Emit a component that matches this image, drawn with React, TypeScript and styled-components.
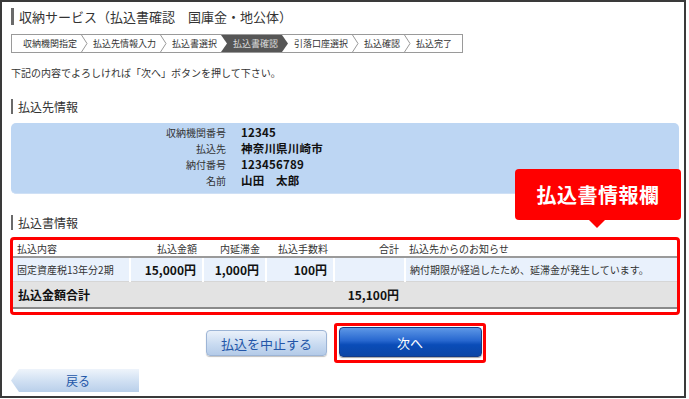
import { Fragment } from "react";
import styled, { createGlobalStyle } from "styled-components";

const GlobalStyle = createGlobalStyle`
	html, body {
		margin: 0;
		padding: 0;
		background: #ffffff;
	}
	body {
		font-family: "Noto Sans CJK JP", "Noto Sans", sans-serif;
		color: #333333;
	}
`;

const Frame = styled.div`
	position: relative;
	box-sizing: border-box;
	width: 686px;
	height: 398px;
	border: 2px solid #3a3a3a;
	padding: 0 5px 0 9px;
	display: flex;
	flex-direction: column;
	align-items: stretch;
`;

const PageTitle = styled.h1`
	margin: 6px 0 0;
	padding-left: 5px;
	border-left: 3px solid #6a6a6a;
	height: 17px;
	line-height: 17px;
	font-size: 13px;
	font-weight: 400;
	color: #333;
	white-space: nowrap;
`;

const Steps = styled.div`
	align-self: flex-start;
	display: flex;
	margin-top: 9px;
	height: 17px;
	border: 1px solid #9a9a9a;
	background: #fff;
`;

const Step = styled.div`
	display: flex;
	align-items: stretch;
`;

const StepLabel = styled.span<{ $active?: boolean; $first?: boolean }>`
	display: block;
	line-height: 17px;
	font-size: 9px;
	padding: 0 4px 0 ${({ $first }) => ($first ? "11px" : "5px")};
	background: ${({ $active }) => ($active ? "#565656" : "#fff")};
	color: ${({ $active }) => ($active ? "#dcdcdc" : "#333")};
	white-space: nowrap;
`;

const StepEnd = styled.span`
	display: block;
	width: 6px;
`;

const Intro = styled.p`
	margin: 13px 0 0;
	font-size: 10px;
	line-height: 14px;
	color: #333;
`;

const SectionTitle = styled.h2<{ $gap: number }>`
	margin: ${({ $gap }) => $gap}px 0 0;
	padding-left: 5px;
	border-left: 2px solid #6a6a6a;
	height: 15px;
	line-height: 15px;
	font-size: 12px;
	font-weight: 400;
	color: #333;
`;

const PayeeBox = styled.div`
	margin-top: 9px;
	height: 71px;
	box-sizing: border-box;
	padding: 1px 0 0;
	background: #bdd6f3;
	border-radius: 5px;
	border-bottom: 1px solid #cfe0f5;
	display: grid;
	grid-template-columns: 215px 1fr;
	column-gap: 15px;
	grid-auto-rows: 16px;
	align-items: center;
`;

const PayeeLabel = styled.div`
	text-align: right;
	font-size: 10px;
	color: #333;
`;

const PayeeValue = styled.div`
	font-size: 11.5px;
	font-weight: 700;
	color: #111;
	letter-spacing: 0.2px;
`;

const Highlight = styled.div`
	margin: 7px -1px 0;
	box-sizing: border-box;
	height: 78px;
	border: 3px solid #ff0000;
	border-radius: 4px;
	padding: 0 0 3px;
`;

const Table = styled.table`
	width: 100%;
	border-collapse: collapse;
	table-layout: fixed;
	font-size: 10px;
	color: #333;
`;

const HeadCell = styled.th<{ $align?: string }>`
	height: 16px;
	padding: 0 6px 0 4px;
	font-weight: 400;
	text-align: ${({ $align }) => $align || "left"};
	border-bottom: 2px solid #9a9a9a;
	white-space: nowrap;
`;

const DataRow = styled.tr`
	background: #e9f1fc;
	border-bottom: 1px solid #d6d6d6;
`;

const DataCell = styled.td<{ $amount?: boolean }>`
	height: 23px;
	padding: 0 6px 0 4px;
	text-align: ${({ $amount }) => ($amount ? "right" : "left")};
	font-size: ${({ $amount }) => ($amount ? "12px" : "10px")};
	font-weight: ${({ $amount }) => ($amount ? 700 : 400)};
	color: ${({ $amount }) => ($amount ? "#111" : "#333")};
	border-right: 2px solid #ffffff;
	white-space: nowrap;

	&:last-child {
		border-right: none;
	}
`;

const TotalRow = styled.tr`
	background: #e3e3e3;
	border-bottom: 2px solid #8a8a8a;
`;

const TotalCell = styled.td<{ $amount?: boolean }>`
	height: 25px;
	padding: 0 6px 0 5px;
	font-size: 12px;
	font-weight: 700;
	color: #111;
	text-align: ${({ $amount }) => ($amount ? "right" : "left")};
	white-space: nowrap;
`;

const Actions = styled.div`
	margin-top: 8px;
	display: flex;
	justify-content: center;
	align-items: center;
	gap: 7px;
	padding-left: 2px;
`;

const CancelButton = styled.button`
	width: 121px;
	height: 26px;
	border: 1px solid #9db5d6;
	border-radius: 4px;
	background: linear-gradient(#eaf1fa, #c9dbf1 55%, #b4cbe8);
	box-shadow: 0 1px 1px rgba(0, 0, 0, 0.25);
	color: #2356a8;
	font-family: inherit;
	font-size: 13px;
	padding: 0;
`;

const NextOutline = styled.div`
	box-sizing: border-box;
	width: 152px;
	height: 40px;
	border: 3px solid #ff0000;
	border-radius: 3px;
	display: flex;
	align-items: center;
	justify-content: center;
	padding-bottom: 2px;
`;

const NextButton = styled.button`
	width: 143px;
	height: 30px;
	border: 1px solid #153b86;
	border-radius: 4px;
	background: linear-gradient(#5d97e6, #2767cf 45%, #0a4cb8 60%, #0b46a6);
	box-shadow: 0 1px 1px rgba(0, 0, 0, 0.35);
	color: #ffffff;
	font-family: inherit;
	font-size: 13px;
	padding: 0;
`;

const BackButton = styled.button`
	align-self: flex-start;
	margin-top: 6px;
	width: 128px;
	height: 23px;
	border: none;
	padding: 0 0 0 6px;
	clip-path: polygon(8px 0, 100% 0, 100% 100%, 8px 100%, 0 50%);
	background: linear-gradient(#eef4fb, #cfdff2 55%, #b9cfea);
	color: #2356a8;
	font-family: inherit;
	font-size: 12px;
`;

const Callout = styled.div`
	position: absolute;
	left: 513px;
	top: 167px;
	width: 166px;
	height: 51px;
	border-radius: 4px;
	background: #ff0000;
	color: #ffffff;
	font-size: 20px;
	font-weight: 700;
	display: flex;
	align-items: center;
	justify-content: center;
	letter-spacing: 0.5px;

	&::after {
		content: "";
		position: absolute;
		left: 74px;
		bottom: -8px;
		border-left: 8px solid transparent;
		border-right: 8px solid transparent;
		border-top: 8px solid #ff0000;
	}
`;

function StepArrow({ from, to, line }: { from: string; to: string; line: boolean }) {
	return (
		<svg width="7" height="17" viewBox="0 0 7 17" style={{ display: "block" }}>
			<rect x="0" y="0" width="7" height="17" fill={to} />
			<polygon points="0,0 6,8.5 0,17" fill={from} />
			{line && <polyline points="0.5,0 6,8.5 0.5,17" fill="none" stroke="#9a9a9a" strokeWidth="1" />}
		</svg>
	);
}

const steps = ["収納機関指定", "払込先情報入力", "払込書選択", "払込書確認", "引落口座選択", "払込確認", "払込完了"];
const activeStep = 3;

const payee = [
	["収納機関番号", "12345"],
	["払込先", "神奈川県川崎市"],
	["納付番号", "123456789"],
	["名前", "山田　太郎"],
];

export default function App() {
	return (
		<>
			<GlobalStyle />
			<Frame>
				<PageTitle>収納サービス（払込書確認　国庫金・地公体）</PageTitle>

				<Steps>
					{steps.map((s, i) => {
						const active = i === activeStep;
						const nextActive = i + 1 === activeStep;
						const last = i === steps.length - 1;
						return (
							<Step key={s}>
								<StepLabel $active={active} $first={i === 0}>
									{s}
								</StepLabel>
								{last ? (
									<StepEnd />
								) : (
									<StepArrow
										from={active ? "#565656" : "#fff"}
										to={nextActive ? "#565656" : "#fff"}
										line={!active && !nextActive}
									/>
								)}
							</Step>
						);
					})}
				</Steps>

				<Intro>下記の内容でよろしければ「次へ」ボタンを押して下さい。</Intro>

				<SectionTitle $gap={19}>払込先情報</SectionTitle>
				<PayeeBox>
					{payee.map(([label, value]) => (
						<Fragment key={label}>
							<PayeeLabel>{label}</PayeeLabel>
							<PayeeValue>{value}</PayeeValue>
						</Fragment>
					))}
				</PayeeBox>

				<SectionTitle $gap={21}>払込書情報</SectionTitle>
				<Highlight>
					<Table>
						<colgroup>
							<col style={{ width: 117 }} />
							<col style={{ width: 73 }} />
							<col style={{ width: 63 }} />
							<col style={{ width: 68 }} />
							<col style={{ width: 71 }} />
							<col />
						</colgroup>
						<thead>
							<tr>
								<HeadCell>払込内容</HeadCell>
								<HeadCell $align="right">払込金額</HeadCell>
								<HeadCell $align="right">内延滞金</HeadCell>
								<HeadCell $align="right">払込手数料</HeadCell>
								<HeadCell $align="right">合計</HeadCell>
								<HeadCell>払込先からのお知らせ</HeadCell>
							</tr>
						</thead>
						<tbody>
							<DataRow>
								<DataCell>固定資産税13年分2期</DataCell>
								<DataCell $amount>15,000円</DataCell>
								<DataCell $amount>1,000円</DataCell>
								<DataCell $amount>100円</DataCell>
								<DataCell $amount></DataCell>
								<DataCell>納付期限が経過したため、延滞金が発生しています。</DataCell>
							</DataRow>
							<TotalRow>
								<TotalCell colSpan={4}>払込金額合計</TotalCell>
								<TotalCell $amount>15,100円</TotalCell>
								<TotalCell></TotalCell>
							</TotalRow>
						</tbody>
					</Table>
				</Highlight>

				<Actions>
					<CancelButton>払込を中止する</CancelButton>
					<NextOutline>
						<NextButton>次へ</NextButton>
					</NextOutline>
				</Actions>

				<BackButton>戻る</BackButton>

				<Callout>払込書情報欄</Callout>
			</Frame>
		</>
	);
}
